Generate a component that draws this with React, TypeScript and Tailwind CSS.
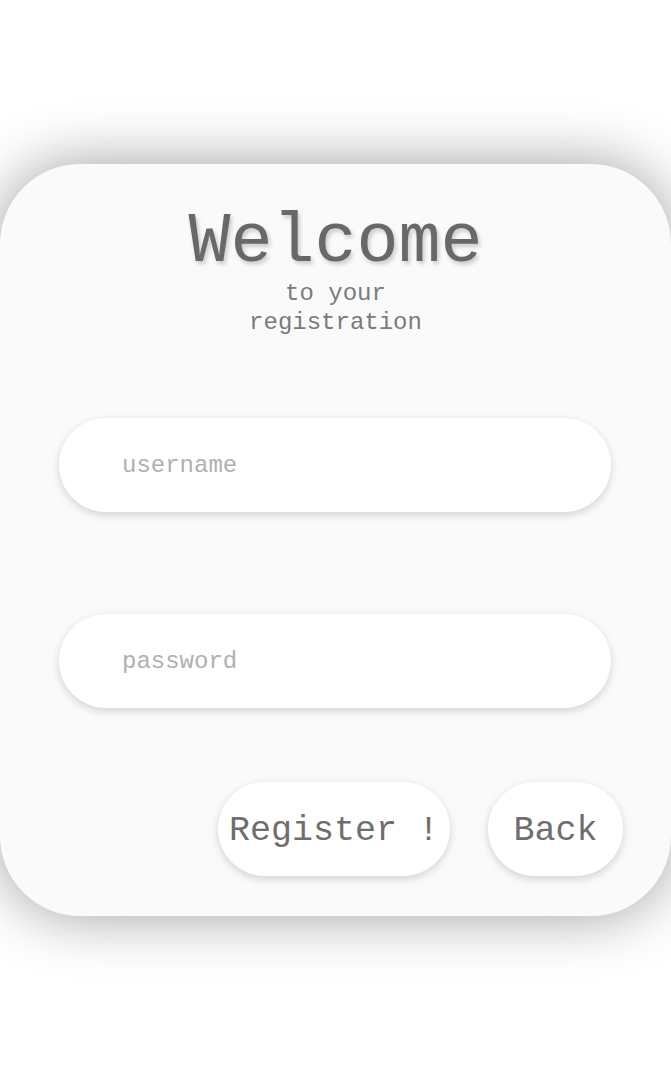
import React from "react"

const mono = "font-['Liberation_Mono','Courier_New',monospace]"

export default function App() {
  return (
    <div className={`min-h-screen bg-white flex items-center ${mono}`}>
      <div className="w-full h-[752px] bg-[#fafafa] rounded-[80px] shadow-[0_0_60px_rgba(0,0,0,0.38)] flex flex-col pt-[43px]">
        {/* Heading */}
        <h1 className="text-center text-[70px] leading-[72px] text-[#686868] [text-shadow:2px_3px_4px_rgba(0,0,0,0.2)]">
          Welcome
        </h1>
        <p className="text-center text-[24px] leading-[29px] text-[#7a7a7a] mx-auto w-[200px]">
          to your registration
        </p>

        {/* Fields */}
        <input
          type="text"
          placeholder="username"
          className="mt-[81px] ml-[59px] w-[552px] h-[94px] rounded-full bg-white pl-[63px] text-[24px] text-[#666] placeholder:text-[#b0b0b0] outline-none shadow-[0_3px_8px_rgba(0,0,0,0.16)]"
        />
        <input
          type="password"
          placeholder="password"
          className="mt-[102px] ml-[59px] w-[552px] h-[94px] rounded-full bg-white pl-[63px] text-[24px] text-[#666] placeholder:text-[#b0b0b0] outline-none shadow-[0_3px_8px_rgba(0,0,0,0.16)]"
        />

        {/* Actions */}
        <div className="mt-[74px] flex justify-end gap-[38px] pr-[48px]">
          <button className="w-[232px] h-[94px] pt-1 rounded-full bg-white text-[35px] text-[#6e6e6e] shadow-[0_3px_8px_rgba(0,0,0,0.16)]">
            Register !
          </button>
          <button className="w-[135px] h-[94px] pt-1 rounded-full bg-white text-[35px] text-[#6e6e6e] shadow-[0_3px_8px_rgba(0,0,0,0.16)]">
            Back
          </button>
        </div>
      </div>
    </div>
  )
}
